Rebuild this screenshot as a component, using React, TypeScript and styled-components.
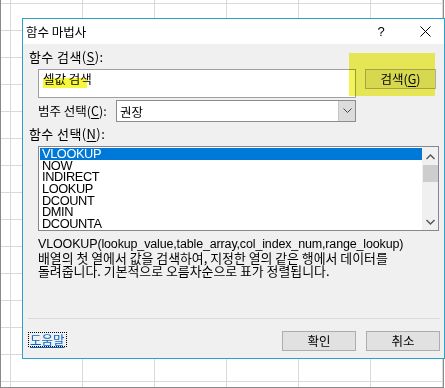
import React from "react";
import styled, { createGlobalStyle } from "styled-components";

const functions = ["VLOOKUP", "NOW", "INDIRECT", "LOOKUP", "DCOUNT", "DMIN", "DCOUNTA"];

const GlobalStyle = createGlobalStyle`
  html, body {
    margin: 0;
    padding: 0;
    background: #ffffff;
  }
  body {
    font-family: "Noto Sans CJK KR", "Liberation Sans", sans-serif;
    font-size: 12px;
    color: #000;
  }
`;

const App: React.FC = () => {
  return (
    <>
      <GlobalStyle />
      <Sheet>
        <Dialog>
          <TitleBar>
            <Title>함수 마법사</Title>
            <HelpMark>?</HelpMark>
            <CloseButton>
              <svg width="11" height="11" viewBox="0 0 11 11">
                <path d="M0.5 0.5 L10.5 10.5 M10.5 0.5 L0.5 10.5" stroke="#000" strokeWidth="1" />
              </svg>
            </CloseButton>
          </TitleBar>
          <Body>
            <Label>
              함수 검색(<u>S</u>):
            </Label>
            <SearchRow>
              <TextBox>
                <Marked>셀값 검색</Marked>
              </TextBox>
              <Button $width={71} $height={20}>
                검색(<u>G</u>)
              </Button>
              <Highlight />
            </SearchRow>
            <CategoryRow>
              <InlineLabel>
                범주 선택(<u>C</u>):
              </InlineLabel>
              <Select>
                <SelectValue>권장</SelectValue>
                <SelectArrow>
                  <svg width="9" height="6" viewBox="0 0 9 6">
                    <path d="M0.5 0.5 L4.5 4.5 L8.5 0.5" stroke="#444" fill="none" strokeWidth="1" />
                  </svg>
                </SelectArrow>
              </Select>
            </CategoryRow>
            <Label $top={5}>
              함수 선택(<u>N</u>):
            </Label>
            <ListBox>
              <Rows>
                {functions.map((name, i) => (
                  <Row key={name} $selected={i === 0}>
                    {name}
                  </Row>
                ))}
              </Rows>
              <ScrollBar>
                <svg width="9" height="6" viewBox="0 0 9 6">
                  <path d="M0.5 5 L4.5 1 L8.5 5" stroke="#555" fill="none" strokeWidth="1.4" />
                </svg>
                <Thumb />
                <Track />
                <svg width="9" height="6" viewBox="0 0 9 6">
                  <path d="M0.5 1 L4.5 5 L8.5 1" stroke="#555" fill="none" strokeWidth="1.4" />
                </svg>
              </ScrollBar>
            </ListBox>
            <Description>
              <Syntax>VLOOKUP(lookup_value,table_array,col_index_num,range_lookup)</Syntax>
              <Explain>
                배열의 첫 열에서 값을 검색하여, 지정한 열의 같은 행에서 데이터를
                <br />
                돌려줍니다. 기본적으로 오름차순으로 표가 정렬됩니다.
              </Explain>
            </Description>
            <Separator />
            <Footer>
              <HelpLink>도움말</HelpLink>
              <Button $width={74} $height={20}>확인</Button>
              <Button $width={74} $height={20}>취소</Button>
            </Footer>
          </Body>
        </Dialog>
      </Sheet>
    </>
  );
};

const Sheet = styled.div`
  position: relative;
  width: 444px;
  height: 388px;
  box-sizing: border-box;
  border-left: 1px solid #8a8a8a;
  border-right: 1px solid #8a8a8a;
  border-bottom: 1px solid #8a8a8a;
  background-color: #ffffff;
  background-image: linear-gradient(to right, #d9d9d9 1px, transparent 1px),
    linear-gradient(to bottom, #d9d9d9 1px, transparent 1px);
  background-size: 72px 100%, 100% 27px;
  background-position: 9px 0, 0 3px;
`;

const Dialog = styled.div`
  position: absolute;
  left: 21px;
  top: 18px;
  width: 423px;
  height: 341px;
  box-sizing: border-box;
  border: 1px solid #2ba3c9;
  background: #f0f0f0;
  display: flex;
  flex-direction: column;
`;

const TitleBar = styled.div`
  height: 25px;
  flex-shrink: 0;
  background: #ffffff;
  display: flex;
  align-items: center;
  padding-left: 3px;
`;

const Title = styled.span`
  flex: 1;
  font-size: 12.5px;
  line-height: 14px;
`;

const HelpMark = styled.span`
  font-family: "Liberation Sans", sans-serif;
  font-size: 13px;
  width: 20px;
  text-align: center;
  margin-right: 29px;
`;

const CloseButton = styled.span`
  width: 11px;
  height: 11px;
  display: flex;
  margin-right: 13px;
`;

const Body = styled.div`
  flex: 1;
  display: flex;
  flex-direction: column;
  padding: 0 4px 0 6px;
`;

const Label = styled.div<{ $top?: number }>`
  margin-top: ${(p) => p.$top ?? 6}px;
  height: 14px;
  line-height: 14px;
  font-size: 13px;
  letter-spacing: 0.4px;

  u {
    text-decoration-thickness: 1px;
    text-underline-offset: 2px;
  }
`;

const SearchRow = styled.div`
  position: relative;
  display: flex;
  align-items: flex-start;
  gap: 9px;
  margin-top: 5px;
  padding-left: 9px;
`;

const TextBox = styled.div`
  width: 318px;
  height: 29px;
  box-sizing: border-box;
  border: 1px solid #a0a0a0;
  background: #ffffff;
  padding: 1px 0 0 4px;
  font-size: 12.5px;
  line-height: 15px;
`;

const Marked = styled.span`
  background-image: linear-gradient(#f6f63a, #f6f63a);
  background-repeat: no-repeat;
  background-size: 90% 55%;
  background-position: left bottom;
`;

const Highlight = styled.div`
  position: absolute;
  left: 320px;
  top: -16px;
  width: 86px;
  height: 43px;
  background: #f4f45a;
  mix-blend-mode: multiply;
  pointer-events: none;
`;

const Button = styled.div<{ $width: number; $height: number }>`
  width: ${(p) => p.$width}px;
  height: ${(p) => p.$height}px;
  box-sizing: border-box;
  border: 1px solid #adadad;
  background: #e1e1e1;
  display: flex;
  align-items: center;
  justify-content: center;
  font-size: 12.5px;
  line-height: 14px;

  u {
    text-decoration-thickness: 1px;
    text-underline-offset: 2px;
  }
`;

const CategoryRow = styled.div`
  display: flex;
  align-items: center;
  margin-top: 2px;
  padding-left: 9px;
`;

const InlineLabel = styled.span`
  width: 78px;
  font-size: 12.5px;
  line-height: 14px;
  white-space: nowrap;

  u {
    text-decoration-thickness: 1px;
    text-underline-offset: 2px;
  }
`;

const Select = styled.div`
  width: 240px;
  height: 22px;
  box-sizing: border-box;
  border: 1px solid #8c8c8c;
  background: #ffffff;
  display: flex;
  align-items: stretch;
`;

const SelectValue = styled.span`
  flex: 1;
  padding-left: 3px;
  display: flex;
  align-items: center;
  font-size: 12.5px;
`;

const SelectArrow = styled.span`
  width: 16px;
  background: #dcdcdc;
  border-left: 1px solid #c4c4c4;
  display: flex;
  align-items: center;
  justify-content: center;
`;

const ListBox = styled.div`
  margin: 5px 0 0 9px;
  width: 401px;
  height: 85px;
  box-sizing: border-box;
  border: 1px solid #828790;
  background: #ffffff;
  display: flex;
`;

const Rows = styled.div`
  flex: 1;
  padding: 1px 0 0 1px;
`;

const Row = styled.div<{ $selected: boolean }>`
  height: 11.7px;
  line-height: 11.7px;
  padding-left: 2px;
  font-family: "Liberation Sans", sans-serif;
  font-size: 12.8px;
  letter-spacing: -0.4px;
  color: ${(p) => (p.$selected ? "#ffffff" : "#000000")};
  background: ${(p) => (p.$selected ? "#0078d7" : "transparent")};
`;

const ScrollBar = styled.div`
  width: 16px;
  background: #f0f0f0;
  display: flex;
  flex-direction: column;
  align-items: center;
  padding: 7px 0 5px;
  box-sizing: border-box;

  svg {
    flex-shrink: 0;
  }
`;

const Thumb = styled.div`
  width: 15px;
  height: 17px;
  margin-top: 5px;
  background: #cdcdcd;
`;

const Track = styled.div`
  flex: 1;
`;

const Description = styled.div`
  margin: 7px 0 0 9px;
`;

const Syntax = styled.div`
  font-family: "Liberation Sans", sans-serif;
  font-size: 12.5px;
  line-height: 13px;
  letter-spacing: -0.15px;
`;

const Explain = styled.div`
  font-size: 12.9px;
  line-height: 13px;
`;

const Separator = styled.div`
  margin-top: auto;
  margin-left: -1px;
  height: 1px;
  background: #dadada;
`;

const Footer = styled.div`
  display: flex;
  align-items: flex-start;
  gap: 10px;
  margin-top: 12px;
  margin-bottom: 7px;
  margin-left: -1px;
`;

const HelpLink = styled.span`
  margin-top: 1px;
  margin-right: auto;
  border: 1px dotted #000;
  padding: 0 1px;
  height: 15px;
  box-sizing: border-box;
  display: flex;
  align-items: center;
  color: #0066cc;
  text-decoration: underline;
  text-underline-offset: 2px;
  font-size: 12.5px;
`;

export default App;
